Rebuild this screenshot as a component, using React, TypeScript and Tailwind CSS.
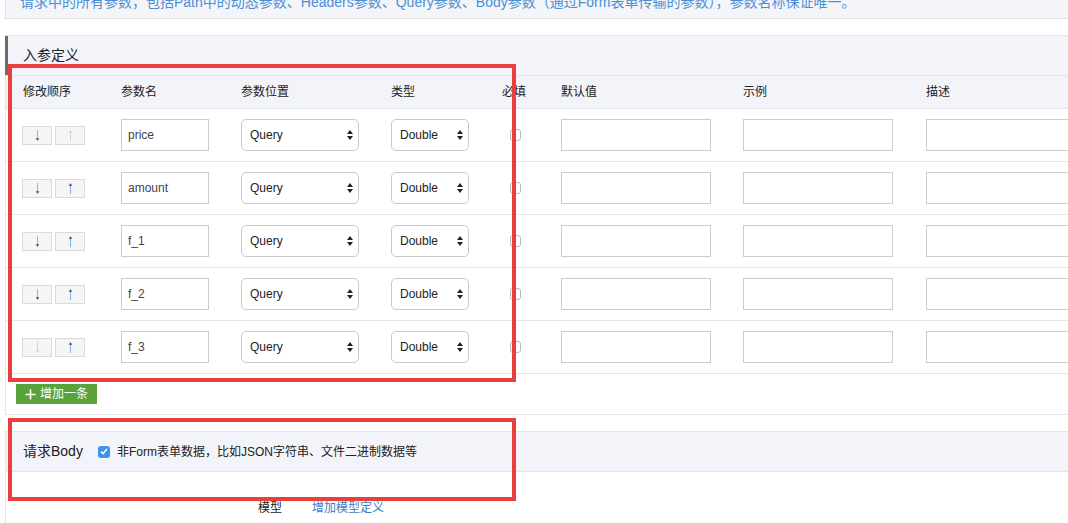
import React from "react";

const ROWS = [
  { name: "price", down: true, up: false },
  { name: "amount", down: true, up: true },
  { name: "f_1", down: true, up: true },
  { name: "f_2", down: true, up: true },
  { name: "f_3", down: false, up: true },
];

const COLS = "grid grid-cols-[98px_120px_150px_111px_59px_182px_183px_190px] pl-[17px]";

function Arrow({ dir, on }: { dir: "down" | "up"; on: boolean }) {
  const shaft = !on ? "#d2d2d2" : dir === "down" ? "#d1ab66" : "#86b0de";
  const head = !on ? "#d2d2d2" : "#4a4a4a";
  return (
    <svg width="7" height="13" viewBox="0 0 7 13">
      {dir === "down" ? (
        <>
          <path d="M3.5 1v9.5" stroke={shaft} strokeWidth="1" />
          <path d="M1.7 9.3l1.8 2.5 1.8-2.5z" fill={head} />
        </>
      ) : (
        <>
          <path d="M3.5 2.5v9.5" stroke={shaft} strokeWidth="1" />
          <path d="M1.7 3.7l1.8-2.5 1.8 2.5z" fill={head} />
        </>
      )}
    </svg>
  );
}

function SelectBox({ value, w }: { value: string; w: string }) {
  return (
    <div
      className={`${w} h-[32px] rounded-[5px] border border-[#c9c9c9] bg-white flex items-center justify-between pl-[8px] pr-[5px] text-[12px] text-[#222]`}
    >
      <span>{value}</span>
      <svg width="6" height="10" viewBox="0 0 6 10">
        <path d="M0 4L3 0L6 4z M0 6L3 10L6 6z" fill="#222" />
      </svg>
    </div>
  );
}

function TextBox({ value, w }: { value?: string; w: string }) {
  return (
    <div className={`${w} h-[32px] border border-[#cccccc] bg-white flex items-center pl-[6px] text-[12px] text-[#444]`}>
      {value}
    </div>
  );
}

export default function App() {
  return (
    <div
      className="relative w-[1068px] h-[523px] overflow-hidden bg-white text-[#333]"
      style={{ fontFamily: '"Liberation Sans", "Noto Sans CJK SC", sans-serif' }}
    >
      <div className="w-[1120px] ml-[5px]">
        {/* 说明 */}
        <div className="h-[19px] overflow-hidden border-l border-b border-[#dfe3ea] bg-[#f3f5f9] flex items-end pb-[6px] pl-[14px]">
          <p className="text-[14px] leading-[20px] text-[#4a8fd6] whitespace-nowrap">
            请求中的所有参数，包括Path中的动态参数、Headers参数、Query参数、Body参数（通过Form表单传输的参数），参数名称保证唯一。
          </p>
        </div>

        {/* 入参定义 */}
        <div className="mt-[16px] border-l border-t border-b border-[#e1e4ea]">
          <div className="-ml-px h-[39px] border-l-[3px] border-[#6b6b6b] bg-[#f3f4f9] flex items-center pl-[15px] text-[14px] text-[#222]">
            入参定义
          </div>
          <div className={`${COLS} h-[34px] items-center border-t border-b border-[#e1e4ea] bg-[#f3f4f9] text-[12px] text-[#222]`}>
            <span>修改顺序</span>
            <span>参数名</span>
            <span>参数位置</span>
            <span>类型</span>
            <span>必填</span>
            <span>默认值</span>
            <span>示例</span>
            <span>描述</span>
          </div>
          {ROWS.map((r) => (
            <div key={r.name} className={`${COLS} h-[53px] items-center border-b border-[#e6e6e6]`}>
              <div className="flex gap-[3px] -ml-px">
                <div className="w-[30px] h-[19px] border border-[#dadada] bg-[#f5f5f5] flex items-center justify-center">
                  <Arrow dir="down" on={r.down} />
                </div>
                <div className="w-[30px] h-[19px] border border-[#dadada] bg-[#f5f5f5] flex items-center justify-center">
                  <Arrow dir="up" on={r.up} />
                </div>
              </div>
              <TextBox value={r.name} w="w-[88px]" />
              <SelectBox value="Query" w="w-[118px]" />
              <SelectBox value="Double" w="w-[78px]" />
              <div className="pl-[8px]">
                <div className="w-[11px] h-[12px] rounded-[3px] border border-[#b8b8b8] bg-white" />
              </div>
              <TextBox w="w-[150px]" />
              <TextBox w="w-[150px]" />
              <TextBox w="w-[150px]" />
            </div>
          ))}
          <div className="pt-[10px] pb-[10px] pl-[10px]">
            <button className="w-[81px] h-[20px] bg-[#5aa33b] text-white text-[12px] flex items-center justify-center gap-[4px]">
              <svg width="11" height="11" viewBox="0 0 11 11">
                <path d="M5.5 0.5v10M0.5 5.5h10" stroke="#fff" strokeWidth="1.6" />
              </svg>
              <span>增加一条</span>
            </button>
          </div>
        </div>

        {/* 请求Body */}
        <div className="mt-[16px] border-l border-t border-[#e1e4ea] h-[200px]">
          <div className="h-[40px] border-b border-[#e1e4ea] bg-[#f3f4f9] flex items-center pl-[17px]">
            <span className="text-[14px] text-[#222]">请求Body</span>
            <span className="ml-[15px] w-[12px] h-[12px] rounded-[3px] bg-[#3a95ef] flex items-center justify-center">
              <svg width="8" height="7" viewBox="0 0 8 7">
                <path d="M1 3.6l2 2L7 1" stroke="#fff" strokeWidth="1.5" fill="none" />
              </svg>
            </span>
            <span className="ml-[7px] text-[12px] text-[#222]">非Form表单数据，比如JSON字符串、文件二进制数据等</span>
          </div>
          <div className="flex pt-[26px] pl-[252px] text-[12px] leading-[20px]">
            <span className="text-[#222]">模型</span>
            <span className="ml-[30px] text-[#3b7ec4]">增加模型定义</span>
          </div>
        </div>
      </div>

      {/* 标注框 */}
      <div className="absolute left-[8px] top-[64px] w-[508px] h-[318px] border-4 border-[#e8403a]" />
      <div className="absolute left-[8px] top-[418px] w-[508px] h-[83px] border-4 border-[#e8403a]" />
    </div>
  );
}
